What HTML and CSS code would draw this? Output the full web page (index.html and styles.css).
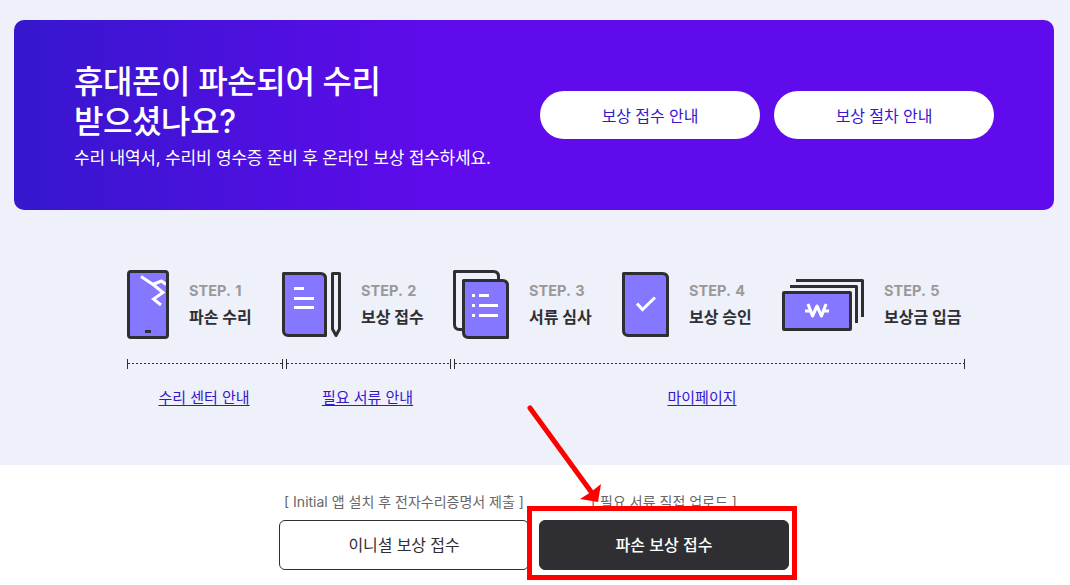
FILE: index.html
```html
<!DOCTYPE html>
<html lang="ko">
<head>
<meta charset="utf-8">
<title>보상 접수</title>
<link rel="stylesheet" href="styles.css">
</head>
<body>
<main class="page">
  <section class="guide">
    <div class="banner">
      <div class="banner-copy">
        <h1 class="banner-title">휴대폰이 파손되어 수리<br>받으셨나요?</h1>
        <p class="banner-desc">수리 내역서, 수리비 영수증 준비 후 온라인 보상 접수하세요.</p>
      </div>
      <div class="banner-actions">
        <a class="pill">보상 접수 안내</a>
        <a class="pill">보상 절차 안내</a>
      </div>
    </div>

    <ol class="steps">
      <li class="step">
        <svg class="icon" width="42" height="70" viewBox="0 0 42 70">
          <rect x="1.5" y="1.5" width="39" height="66" rx="2.5" fill="#8577ff" stroke="#2f2f33" stroke-width="3"/>
          <path d="M14 6.500L26 14.500L36 22.500L26.500 29L34 35M25.500 14.500L34.500 11L39 14.500" fill="none" stroke="#fff" stroke-width="3"/>
          <path d="M40.500 5V30" stroke="#2f2f33" stroke-width="3"/>
          <rect x="18" y="60" width="6" height="3" fill="#2f2f33"/>
        </svg>
        <div class="step-text"><span class="step-no">STEP. 1</span><strong class="step-name">파손 수리</strong></div>
      </li>
      <li class="step">
        <svg class="icon" width="59" height="70" viewBox="0 0 59 70">
          <path d="M1.500 3.500H38.500Q43.500 3.500 43.500 8.500V65.500H6.500Q1.500 65.500 1.500 60.500Z" fill="#8577ff" stroke="#2f2f33" stroke-width="3" stroke-linejoin="round"/>
          <path d="M12 18.500H22M12 28.500H32M12 37.500H32" stroke="#fff" stroke-width="3"/>
          <path d="M50.500 3.500H57.500V59L54 65.500L50.500 59Z" fill="none" stroke="#2f2f33" stroke-width="3" stroke-linejoin="round"/>
        </svg>
        <div class="step-text"><span class="step-no">STEP. 2</span><strong class="step-name">보상 접수</strong></div>
      </li>
      <li class="step">
        <svg class="icon" width="56" height="70" viewBox="0 0 56 70">
          <path d="M1.500 1.500H40.500Q45.500 1.500 45.500 6.500V59.500H6.500Q1.500 59.500 1.500 54.500Z" fill="none" stroke="#2f2f33" stroke-width="3" stroke-linejoin="round"/>
          <path d="M10.500 10.500H49.500Q54.500 10.500 54.500 15.500V67.500H15.500Q10.500 67.500 10.500 62.500Z" fill="#8577ff" stroke="#2f2f33" stroke-width="3" stroke-linejoin="round"/>
          <path d="M19 25.500H22M26 25.500H36M19 35.500H22M26 35.500H45M19 45.500H22M26 45.500H45" stroke="#fff" stroke-width="3"/>
        </svg>
        <div class="step-text"><span class="step-no">STEP. 3</span><strong class="step-name">서류 심사</strong></div>
      </li>
      <li class="step">
        <svg class="icon" width="47" height="70" viewBox="0 0 47 70">
          <path d="M1.500 3.500H40.500Q45.500 3.500 45.500 8.500V65.500H6.500Q1.500 65.500 1.500 60.500Z" fill="#8577ff" stroke="#2f2f33" stroke-width="3" stroke-linejoin="round"/>
          <path d="M15 33.500L20.500 39.500L33 27.500" fill="none" stroke="#fff" stroke-width="3"/>
        </svg>
        <div class="step-text"><span class="step-no">STEP. 4</span><strong class="step-name">보상 승인</strong></div>
      </li>
      <li class="step">
        <svg class="icon" width="82" height="70" viewBox="0 0 82 70">
          <path d="M14 10.500H80.500V47M8 16.500H74.500V53" fill="none" stroke="#2f2f33" stroke-width="3" stroke-linejoin="round"/>
          <rect x="1.500" y="22.500" width="67" height="37" rx="0.500" fill="#8577ff" stroke="#2f2f33" stroke-width="3" stroke-linejoin="round"/>
          <path d="M26 34L30.500 46L35 36L39.500 46L44 34" fill="none" stroke="#fff" stroke-width="3.100" stroke-linejoin="round"/>
          <path d="M23 41H30M40 41H47" stroke="#fff" stroke-width="3"/>
        </svg>
        <div class="step-text"><span class="step-no">STEP. 5</span><strong class="step-name">보상금 입금</strong></div>
      </li>
    </ol>

    <div class="ranges">
      <div class="range"><span class="range-line"></span><a class="range-link">수리 센터 안내</a></div>
      <div class="range"><span class="range-line"></span><a class="range-link">필요 서류 안내</a></div>
      <div class="range range-wide"><span class="range-line"></span><a class="range-link">마이페이지</a></div>
    </div>
  </section>

  <section class="submit">
    <div class="choice">
      <p class="choice-note">[ Initial 앱 설치 후 전자수리증명서 제출 ]</p>
      <a class="button">이니셜 보상 접수</a>
    </div>
    <div class="choice">
      <p class="choice-note">[ 필요 서류 직접 업로드 ]</p>
      <a class="button button-dark">파손 보상 접수</a>
    </div>
  </section>

  <svg class="callout" width="1070" height="585" viewBox="0 0 1070 585">
    <rect x="529.500" y="508.500" width="265" height="69" fill="none" stroke="#f00" stroke-width="5"/>
    <path d="M530 408L592 493" stroke="#f00" stroke-width="5" stroke-linecap="round"/>
    <path d="M601 484L598 502L580 499L591 492Z" fill="#f00"/>
  </svg>
</main>
</body>
</html>
```
FILE: styles.css
```css
* { box-sizing: border-box; }
body {
  margin: 0;
  background: #fff;
  color: #2f2f33;
  font-family: Inter, "Noto Sans CJK KR", sans-serif;
  letter-spacing: -0.1px;
}
h1, p, ol { margin: 0; padding: 0; }
.page { position: relative; width: 1070px; height: 585px; overflow: hidden; }
.guide { height: 465px; padding: 20px 16px 0 14px; background: #eef0fa; }
.banner {
  display: flex;
  align-items: center;
  justify-content: space-between;
  height: 190px;
  padding: 0 60px;
  border-radius: 10px;
  background: linear-gradient(90deg, #3617ce 0%, #5f0beb 41%, #5f0beb 100%);
  color: #fff;
}
.banner-copy { padding-top: 2px; }
.banner-title { font-size: 32px; line-height: 40px; font-weight: 500; letter-spacing: -0.4px; white-space: nowrap; }
.banner-desc { margin-top: 4px; font-size: 17px; line-height: 25px; letter-spacing: -0.2px; white-space: nowrap; }
.banner-actions { display: flex; gap: 14px; }
.pill {
  display: flex;
  align-items: center;
  justify-content: center;
  width: 220px;
  height: 48px;
  border-radius: 24px;
  background: #fff;
  color: #3617ce;
  font-size: 16px;
}
.steps {
  display: grid;
  grid-template-columns: 155px 171px 169px 160px 183px;
  padding: 60px 0 0 113px;
  list-style: none;
}
.step { display: flex; gap: 20px; height: 70px; }
.icon { display: block; flex: none; }
.step-text { display: flex; flex-direction: column; padding-top: 9px; white-space: nowrap; }
.step-no { color: #999; font-size: 14.5px; line-height: 24px; font-weight: 700; letter-spacing: 0; word-spacing: 1.5px; }
.step-name { font-size: 16px; line-height: 28px; font-weight: 700; letter-spacing: 0; }
.ranges {
  display: grid;
  grid-template-columns: 156px 165px 511px;
  gap: 3px;
  padding: 19px 0 0 113px;
}
.range { display: flex; flex-direction: column; align-items: center; gap: 17px; }
.range-line {
  display: flex;
  align-items: center;
  width: 100%;
  height: 10px;
  padding-bottom: 1px;
  border: solid #2f2f33;
  border-width: 0 1px;
}
.range-line::before { content: ""; flex: 1; height: 1px; background: repeating-linear-gradient(90deg, #2f2f33 0 2px, transparent 2px 4px); }
.range-link { margin-right: 2px; color: #3617ce; font-size: 15px; line-height: 24px; letter-spacing: 0; text-decoration: underline; text-underline-offset: 2px; }
.range-wide .range-link { margin-right: 15px; }
.submit { display: flex; gap: 10px; padding: 25px 0 0 279px; }
.choice { width: 250px; }
.choice-note { height: 30px; color: #666; font-size: 14px; line-height: 24px; letter-spacing: 0; text-align: center; white-space: nowrap; }
.button {
  display: flex;
  align-items: center;
  justify-content: center;
  height: 50px;
  padding-bottom: 2px;
  border: 1px solid #2f2f33;
  border-radius: 6px;
  font-size: 16px;
}
.button-dark { background: #2f2f33; color: #fff; font-weight: 500; letter-spacing: 0; }
.callout { position: absolute; inset: 0; }
```
